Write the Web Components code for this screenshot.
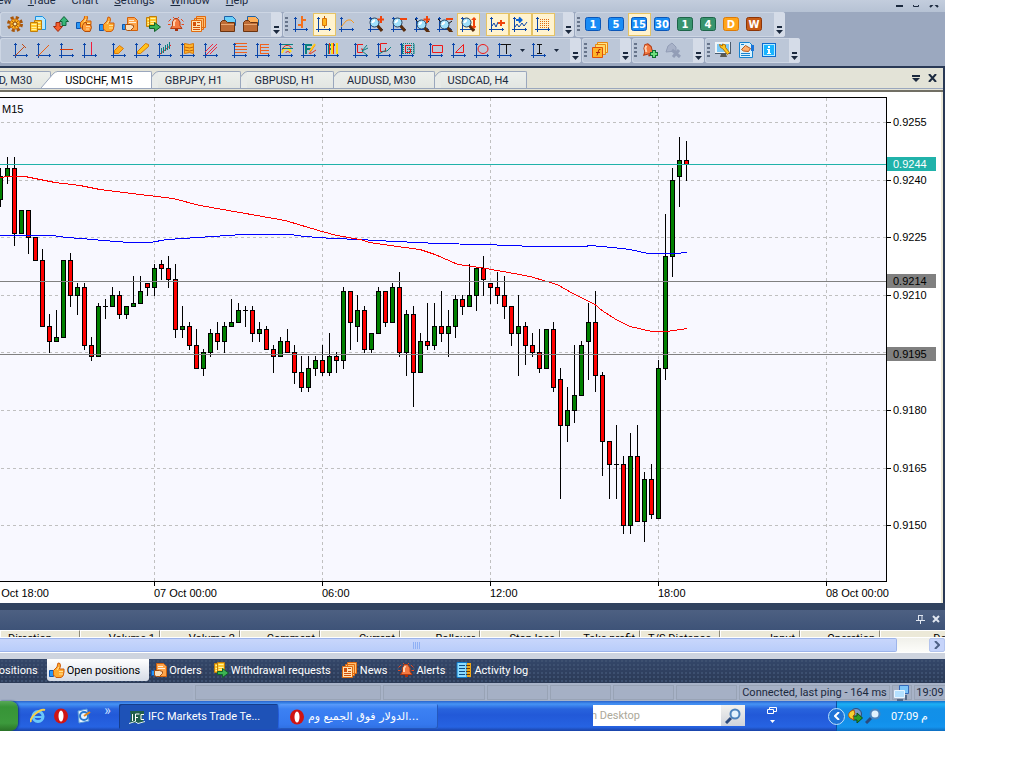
<!DOCTYPE html>
<html lang="en">
<head>
<meta charset="utf-8">
<title>Trade Terminal</title>
<style>
    html, body {
        height: 100%;
        margin: 0;
    }
    body {
        box-sizing: border-box;
        padding: 0 79px 37px 0;
        background: #fff;
        overflow: hidden;
        font: 11px/13px Roboto, "Liberation Sans", Arial, sans-serif;
        color: #1b293e;
    }
</style>
</head>
<body>
<trade-terminal></trade-terminal>

<script>
// ---------- icons (16x16) ----------
const AXES = '<path d="M2.500 1v15M0 13.500h15M1 2.500h3M13.500 12v3" stroke="#0a46aa" fill="none"/>'
const LENS = '<path d="M9 9l5 6" stroke="#5a2d0c" stroke-width="3"/><circle cx="6.500" cy="6.500" r="4.500" fill="#9fe0fb" stroke="#24405f"/><path d="M4.500 7a2.500 2.500 0 0 1 2.500-2.500" stroke="#fff" fill="none" stroke-width="2"/>'
const PLUS = '<path d="M13 0v7M9.500 3.500h7" stroke="#f0440c" stroke-width="2"/>'
const MINUS = '<path d="M9 3h7" stroke="#f0440c" stroke-width="2"/>'
const FIB = '<path d="M5 12V3h6M5 7h5" stroke="#0a8080" stroke-width="2" fill="none"/>'
const SHEET = '<path d="M5.500 1.500h7l3 3v10h-10z" fill="#ffa54a" stroke="#d0600c"/>'
const COINS = (x, y) => `<path d="M${x} ${y}h7v9h-7z" fill="#ffc62a" stroke="#c07c0a"/><path d="M${x + 1} ${y + 2}h5m-5 3h5m-5 2h5" stroke="#fff4a0" fill="none"/>`
const THUMB = '<path d="M.5 8.500h4v6h-4z" fill="#2a96f5" stroke="#0b55b0"/><path d="M4.500 8.500L8 5l1-4 2 .500.500 2.500-1 3h4.500v3l-1 4-2 1.500H7L4.500 13z" fill="#ffab30" stroke="#d05c0a"/><path d="M8 8l2-3M10 9.500h4M10 12h4" stroke="#ffe49a"/>'
const BELL = '<path d="M2.500 12.500l2-3V6l2-3.500h3L12 6v3.500l2 3z" fill="#f47a42" stroke="#b53a10"/><path d="M6 10V6l1.500-2" stroke="#ffd2b0" stroke-width="2" fill="none"/><path d="M7 14h3" stroke="#a5300d" stroke-width="2"/>'
const NEWS = '<path d="M5.500.5h9v11h-9zM3.500 2.500h9v11h-9z" fill="#ffc070" stroke="#e06a10"/><path d="M.5 4.500h10v11H.5z" fill="#ffe2b0" stroke="#e06a10"/><path d="M2 6h3v4H2zM6 6h3v1H6zM6 9h3v1H6zM2 11h7v1H2zM2 13h7v1H2z" fill="#d2500c"/>'
const PASTE = c => `<path d="M4.500.5h8l3 3v6h-11z" fill="${c}" stroke="#1d62a8"/><path d="M.5 6.500l2-2h3l2 2h7v9H.5z" fill="#bd6c36" stroke="#6b330f"/><path d="M1 8.500h13" stroke="#e8a772"/>`
const TILE = (c, d) => `<rect x=".5" y="1.500" width="15" height="13" rx="2" fill="${c}" stroke="${d}"/>`
const OPERA = '<ellipse cx="8" cy="8" rx="7" ry="7.500" fill="#cf1414"/><ellipse cx="8" cy="8" rx="2.500" ry="5.500" fill="#fff"/>'
const ICONS = {
    gear: '<circle cx="8" cy="8" r="6.500" fill="none" stroke="#a8560a" stroke-width="3" stroke-dasharray="3 2.100"/><circle cx="8" cy="8" r="5" fill="#ffb41e" stroke="#c5670c"/><path d="M8 4v8M4 8h8M5 5l6 6M11 5l-6 6" stroke="#b86408"/><circle cx="8" cy="8" r="2" fill="#ffe9a6" stroke="#8a4608"/>',
    ledger: '<path d="M5.500.5h7l3 3v10h-10z" fill="#b4e8ff" stroke="#1a90e0"/>' + COINS(4.5, 4.5) + COINS(0.5, 6.5),
    swap: '<path d="M11 .500l4.500 5H13v4H9v-4H6.500z" fill="#38b878" stroke="#126338"/><path d="M5 15.500l-4.500-5H3v-4h4v4h2.500z" fill="#f5602f" stroke="#a32a0d"/>',
    thumb2: '<g transform="translate(0 -2)">' + THUMB + '</g><path d="M6.500 9.500l2-3h2v2h4l1 3-1.500 4h-5l-2.500-2z" fill="#ff9c38" stroke="#b04c0a"/><path d="M10 10.500h4M10 13h3" stroke="#ffd89a"/>',
    thumb: THUMB,
    orders: SHEET + '<path d="M7 4.500h5M7 6.500h7" stroke="#fff0d8"/><path d="M.5 8.500h3v5h-3z" fill="#2a96f5" stroke="#0b55b0"/><path d="M3.500 8.500h5l3 1v2l-3 3h-3l-2-1z" fill="#fbe0bc" stroke="#a8500f"/>',
    withdraw: COINS(1.5, 1.5) + COINS(4.5, 0.5) + '<path d="M4.500 9.500h5v-3l6 4.500-6 4.500v-3h-5z" fill="#3cb454" stroke="#12632a"/>',
    bell: BELL + '<path d="M.5 5.500L3 3M13 3l2.500 2.500M0 8.500h2.500M13.500 8.500H16M5 1l1 1M11 1l-1 1" stroke="#e8481c"/>',
    news: NEWS,
    pasteBlue: PASTE('#6ad0fa'),
    pasteOrange: PASTE('#ffb05a'),
    bars: AXES + '<path d="M9 0v12M5 9h4M9 4h4" stroke="#f5701a" stroke-width="2"/>',
    candle: AXES + '<path d="M8.500 0v12" stroke="#b85a06"/><path d="M6.500 2.500h4v7h-4z" fill="#ffb41e" stroke="#d87408"/>',
    line: AXES + '<path d="M2 11l5-6 2-1h3l3 3" stroke="#f5981c" fill="none"/>',
    zoomInA: AXES + LENS + PLUS,
    zoomOutA: AXES + LENS + MINUS,
    zoomInB: AXES + '<path d="M1 3l4 4M15 5l-4 3" stroke="#111" fill="none"/><g transform="translate(1 2)">' + LENS + '</g>' + PLUS,
    zoomOutB: AXES + '<path d="M1 3l4 4M15 5l-4 3" stroke="#111" fill="none"/><g transform="translate(1 2)">' + LENS + '</g>' + MINUS,
    zoomFit: AXES + LENS + '<path d="M14 2v10" stroke="#f0440c" stroke-width="2"/><path d="M11 4l3-3 3 3zM11 10l3 3 3-3z" fill="#f0440c"/>',
    shift: AXES + '<path d="M3 10l2-3 2 4 2-5" stroke="#0a46aa" fill="none"/><path d="M9 7h7M12 4v6" stroke="#f0440c" stroke-width="2"/>',
    scroll: AXES + '<path d="M3 11l2-3 2 3 3-4 2 3 3-4" stroke="#0a46aa" fill="none"/><path d="M4 4h5M7 1.500L9.500 4 7 6.500" stroke="#0a64d8" fill="none" stroke-width="2"/>',
    grid: AXES + '<path d="M5 3.500h10M5 5.500h10M5 7.500h10M5 9.500h10M5 11.500h10" stroke="#e06a10" stroke-dasharray="1 1"/>',
    arrowLine: AXES + '<path d="M2 14l9-9M9 2l4 4" stroke="#c04a18"/>',
    trend: AXES + '<path d="M2 14L13 3" stroke="#f06010"/>',
    horiz: AXES + '<path d="M1 7.500h13" stroke="#d83808"/>',
    vert: AXES + '<path d="M9.500 0v13" stroke="#f01c3c"/>',
    channelA: AXES + '<path d="M3.500 8.500l5-5 4 3-5 5h-4z" fill="#ffae1e" stroke="#d87a08"/>',
    channelB: AXES + '<path d="M3.500 9.500l8-8 3 1v2l-8 7h-3z" fill="#ffc21a" stroke="#d87a08"/>',
    regress: AXES + '<path d="M3 12L14 3" stroke="#e81818"/><path d="M4.500 6v6M6.500 5v6M8.500 3v6M10.500 2v6M12.500 0v7" stroke="#0a8080"/>',
    deviation: AXES + '<path d="M4.500 1.500l5 1 4-1v10l-4-1-5 1z" fill="#ffb42a" stroke="#d87808"/><path d="M4.500 5l5 1 4-1M4.500 8l5 1 4-1" stroke="#c46408" fill="none"/>',
    parallel: AXES + '<path d="M2 10L10 2M3 13L14 2M7 12l7-7" stroke="#f02840" fill="none"/>',
    levels: AXES + '<path d="M3 1.500h12M3 4.500h12M3 7.500h12M3 10.500h12" stroke="#f0601c"/>',
    levelsB: AXES + '<path d="M5 2.500h9M5 5.500h9M5 8.500h9M5 11.500h9M5.500 2v9" stroke="#f0601c"/>',
    fan: AXES + '<path d="M4 8c2-6 8-6 10-1" stroke="#e82818" fill="none"/><path d="M4 11c2-6 6-6 9-1" stroke="#ffdc18" fill="none" stroke-width="2"/><path d="M4 2.500h11M4 6.500h11" stroke="#0a8080"/><path d="M8 11c0-2 3-2 4 0" stroke="#e82818" fill="none"/>',
    fibArrow: AXES + FIB + '<path d="M8 12l6-9M9 12l6-4" stroke="#e83a18"/><path d="M9 9l5-7" stroke="#ffc818" stroke-width="2"/>',
    fibBars: AXES + FIB + '<path d="M5.500 1v11M9.500 1v11" stroke="#e82818"/><path d="M13 1v11M8 1v11" stroke="#ffdc18" stroke-width="2"/>',
    gannA: AXES + '<path d="M10 2.500H4.500v8h5V7H8" stroke="#e81818" fill="none"/><path d="M9 9l5-6M9 9l6-3M9 9l5 4" stroke="#0a8080"/>',
    gannB: AXES + '<path d="M11 1.500H4.500v8h5V6" stroke="#e81818" fill="none"/><path d="M3 12l5-3h3l4-4" stroke="#0a8080" fill="none"/>',
    gannC: AXES + '<path d="M4 1.500h11M4 3.500h11M4 5.500h11M4 7.500h11M4 9.500h11M4 11.500h11" stroke="#0a8080" stroke-dasharray="1 1"/><path d="M3.500 2v10M15 2v10" stroke="#0a8080"/><path d="M12 3.500H6.500v7h5V7H9" stroke="#e81818" fill="none"/>',
    rect: AXES + '<path d="M4.500 3.500h10v7h-10z" stroke="#f01818" fill="none"/>',
    triangle: AXES + '<path d="M4.500 10.500l8-8v8z" stroke="#f01818" fill="none"/>',
    ellipse: AXES + '<ellipse cx="9" cy="7" rx="5" ry="4.500" stroke="#f01818" fill="none"/>',
    text: AXES + '<path d="M4 2.500h10M9.500 2v10" stroke="#111" fill="none"/>',
    label: AXES + '<path d="M6 2.500h5M8.500 3v8M6 11.500h5" stroke="#111" fill="none"/>',
    script: '<path d="M5.500.5h10v10h-10z" fill="#ffe38a" stroke="#e88810"/><path d="M3.500 2.500h10v10h-10z" fill="#ffd868" stroke="#e88810"/><path d="M.5 5.500h10v10H.5z" fill="#ffb52a" stroke="#e0500a"/><path d="M8.500 7.500H7L5 13.500M4 10.500h4" stroke="#b02a08" fill="none"/>',
    bellAdd: '<g transform="rotate(-15 8 8) translate(-2 -1)">' + BELL + '</g><path d="M12 8v8M8 12h8" stroke="#127032" stroke-width="4"/><path d="M12 9v6M9 12h6" stroke="#6ee07a" stroke-width="2"/>',
    bellOff: '<path d="M1 10l2-6 4-3 4 4v4z" fill="#a8b2c8" stroke="#929db6"/><path d="M7 8l8 7M14 8l-6 7" stroke="#929db6" stroke-width="3"/>',
    tools: '<path d="M1 1h14v10H1z" fill="#7cc8f5" stroke="#eef4f8" stroke-width="2"/><path d="M0 11.500h16M15.500 0v12" stroke="#4a5a6c"/><path d="M6 12h5l1 3H5z" fill="#5a5a52"/><path d="M4.500 2.500l1 3 2 1 5 6 2-2-4-5V3l-3-1v2z" fill="#ffc81e" stroke="#b87406"/>',
    contract: '<path d="M1.500.5h10l3 3v12h-13z" fill="#d8f2ff" stroke="#1583d0"/><path d="M3 2.500h3M3 11.500h9M3 13.500h9" stroke="#1583d0"/><path d="M3.500 7.500l4-4 5 3-2 3-5-.500z" fill="#ffb070" stroke="#b4561a"/><path d="M13 3h3v6h-3z" fill="#1a74d8"/>',
    info: '<rect x="1.500" y="1.500" width="13" height="13" fill="#19b4ff" stroke="#0a6ad0"/><rect x="2.500" y="2.500" width="11" height="11" fill="none" stroke="#b4ecff"/><path d="M7 4h2v2H7zM6 7h3v4h1v1H6v-1h1V8H6z" fill="#fff"/>',
    activity: '<path d="M1 .5h10v15H1z" fill="#8cdcff" stroke="#0e78c8"/><path d="M3 3.500h6M3 6.500h6M3 9.500h6M3 12.500h6" stroke="#0c4b86"/><path d="M11 1h4v14h-4z" fill="#f0a818"/><path d="M10 3.500h4M10 6.500h4M10 9.500h4M10 12.500h4" stroke="#6c3c04"/>',
    m1: TILE('#1a8cf5', '#0a56b8'),
    h1: TILE('#38946e', '#1d6448'),
    d1: TILE('#ffa51a', '#dc7a08'),
    w1: TILE('#c65a14', '#8c3406'),
    ie: '<circle cx="8" cy="8.500" r="5" fill="none" stroke="#69c8fb" stroke-width="3"/><path d="M4 9h9" stroke="#69c8fb" stroke-width="2"/><path d="M1 14c-2-4 9-14 14-12" stroke="#f5cf4a" stroke-width="2" fill="none"/>',
    opera: OPERA,
    outlook: '<path d="M2 3l9-2 2 12-10 2z" fill="#e8f4ff" stroke="#5a9bd8"/><circle cx="8" cy="8" r="4" fill="none" stroke="#2a7ad0" stroke-width="2"/><path d="M8 8l6-4" stroke="#e88a18" stroke-width="2"/>',
    ifc: '<path d="M1 2h14v3l-2 3 2 6H1l1-7z" fill="#21604a"/><path d="M3.500 12V5M6.500 12V5h4M6 8.500h3M15 5.500h-3v5h3" stroke="#fff" fill="none"/><path d="M0 14.500l6-2 3 2 7-2" stroke="#dcecf8" fill="none"/>',
    lens: '<path d="M6 10l-5 5" stroke="#2b4a7c" stroke-width="3"/><circle cx="10" cy="6" r="4.500" fill="#e2f2fd" stroke="#4b83bd" stroke-width="2"/>',
    globe: '<circle cx="9" cy="6" r="5.500" fill="#7a9cc8" stroke="#2c4c7c"/><path d="M6 8h4v-3l5.500 5-5.500 5v-3H6z" fill="#2c9c28" stroke="#0f4c14"/><path d="M7 2C2 3 0 7 3 10l4 2-1-4 2-2z" fill="#f5d230" stroke="#b4560c"/>',
    net: '<path d="M5.500.5h9v8h-9z" fill="#7cc4f8" stroke="#3468b8"/><path d="M.5 5.500h10v7H.5z" fill="#b4e0ff" stroke="#e8f4ff"/><path d="M3 15h6M12 10v5" stroke="#566a88" stroke-width="2"/>',
    restore: '<path d="M5.500 3.500h7v4h-7z" fill="none" stroke="#fff"/><path d="M3.500 5.500h6v4h-6z" fill="#2460dc" stroke="#fff"/>',
}

function define(tag, css, render) {
    customElements.define(tag, class extends HTMLElement {
        connectedCallback() {
            if (this.shadowRoot) return
            const root = this.attachShadow({ mode: "open" })
            root.innerHTML = `<style>:host{box-sizing:border-box}*{box-sizing:border-box}button{font:inherit;color:inherit;border:0;background:none;padding:0;margin:0}${css}</style>${render(this)}`
        }
    })
}

define("ui-icon", `
    :host { display: block; flex: none; width: 16px; height: 16px; }
    svg { display: block; }
`, el => `<svg width="16" height="16" viewBox="0 0 16 16" aria-hidden="true">${ICONS[el.getAttribute("name")] || ""}</svg>`)

// ---------- menu ----------
define("menu-bar", `
    :host { display: flex; align-items: flex-end; justify-content: space-between; height: 12px; overflow: hidden;
            background: linear-gradient(#c3cddd, #b6c2d4); }
    nav { display: flex; gap: 16px; height: 18px; margin-left: -12px; }
    button { height: 13px; }
    .win { display: flex; gap: 9px; height: 12px; align-items: flex-start; padding-right: 6px; }
    svg { display: block; }
`, () => `
    <nav aria-label="Main menu">
        <button>View</button><button><u>T</u>rade</button><button>Chart</button>
        <button><u>S</u>ettings</button><button><u>W</u>indow</button><button><u>H</u>elp</button>
    </nav>
    <div class="win">
        <button aria-label="Minimize"><svg width="8" height="3"><path d="M1 1h7" stroke="#1b293e" stroke-width="2"/></svg></button>
        <button aria-label="Restore"><svg width="8" height="3"><path d="M1.500 0v1.500h5V0" stroke="#1b293e" fill="none"/></svg></button>
        <button aria-label="Close"><svg width="10" height="3"><path d="M4 -1L1 2M6 -1l3 3" stroke="#1b293e" stroke-width="2"/></svg></button>
    </div>`)

// ---------- toolbars ----------
define("tool-strip", `
    :host { display: flex; align-items: stretch; height: 25px; padding-left: 4px; border-radius: 3px;
            background: #bcc7d8; box-shadow: inset 0 0 0 1px #cdd6e4; }
    :host([grip]) { padding-left: 0; }
    :host([wide]) { padding-left: 10px; }
    .grip { width: 3px; margin: 5px 2px; background: repeating-linear-gradient(#67748a 0 2px, transparent 2px 4px); }
    .items { display: flex; align-items: center; }
    .more { display: flex; align-items: flex-end; justify-content: center; width: 11px; margin-left: 8px; padding-bottom: 3px;
            background: #d5dce8; border-radius: 0 3px 3px 0; }
    ::slotted(hr) { width: 6px; border: 0; margin: 0; }
`, el => `
    ${el.hasAttribute("grip") ? '<span class="grip"></span>' : ""}
    <div class="items"><slot></slot></div>
    <button class="more" aria-label="Toolbar options"><svg width="7" height="8"><path d="M1 1h5" stroke="#1b293e" stroke-width="2"/><path d="M0 4h7L3.500 8z" fill="#1b293e"/></svg></button>`)

define("tool-button", `
    :host { display: flex; }
    button { display: grid; place-items: center; width: 23px; height: 23px; padding: 0 1px 1px 0; border: 1px solid transparent; }
    button > * { grid-area: 1 / 1; }
    :host([pressed]) button { background: #fff3cf; border: 1px solid #e5c365; }
    .cap { color: #fff; font: bold 10px/13px "DejaVu Sans", sans-serif; z-index: 1; }
    .menu { width: 11px; padding: 0; }
`, el => `
    <button title="${el.getAttribute("label")}" aria-label="${el.getAttribute("label")}" aria-pressed="${el.hasAttribute("pressed")}">
        <ui-icon name="${el.getAttribute("icon")}"></ui-icon>
        ${el.textContent ? '<span class="cap"><slot></slot></span>' : ""}
    </button>
    ${el.hasAttribute("menu") ? '<button class="menu" aria-label="More"><svg width="5" height="3"><path d="M0 0h5L2.500 3z" fill="#1b293e"/></svg></button>' : ""}`)

const btn = (icon, label, attrs = "", text = "") =>
    `<tool-button icon="${icon}" label="${label}" ${attrs}>${text}</tool-button>`

define("tool-rows", `
    :host { display: flex; flex-direction: column; gap: 1px; height: 54px; padding-bottom: 3px; background: #9ba8bf; }
    .row { display: flex; gap: 1px; }
    hr { width: 6px; border: 0; margin: 0; }
`, () => `
    <div class="row">
        <tool-strip>
            ${btn("gear", "Options")}${btn("ledger", "Accounts")}${btn("swap", "Transfer")}${btn("thumb2", "Closed positions")}${btn("thumb", "Open positions")}${btn("orders", "Orders")}${btn("withdraw", "Withdrawal requests")}${btn("bell", "Alerts")}${btn("news", "News")}<hr>${btn("pasteBlue", "Load template")}${btn("pasteOrange", "Save template")}
        </tool-strip>
        <tool-strip grip>
            ${btn("bars", "Bars")}${btn("candle", "Candles", "pressed")}${btn("line", "Line")}<hr>${btn("zoomInA", "Zoom in")}${btn("zoomOutA", "Zoom out")}${btn("zoomInB", "Expand")}${btn("zoomOutB", "Shrink")}${btn("zoomFit", "Auto fit", "pressed")}<hr>${btn("shift", "Chart shift", "pressed")}${btn("scroll", "Auto scroll", "pressed")}${btn("grid", "Grid", "pressed")}
        </tool-strip>
        <tool-strip grip>
            ${btn("m1", "1 minute", "", "1")}${btn("m1", "5 minutes", "", "5")}${btn("m1", "15 minutes", "pressed", "15")}${btn("m1", "30 minutes", "", "30")}${btn("h1", "1 hour", "", "1")}${btn("h1", "4 hours", "", "4")}${btn("d1", "Day", "", "D")}${btn("w1", "Week", "", "W")}
        </tool-strip>
    </div>
    <div class="row">
        <tool-strip wide>
            ${btn("arrowLine", "Arrow")}${btn("trend", "Trend line")}${btn("horiz", "Horizontal line")}${btn("vert", "Vertical line")}<hr>${btn("channelA", "Channel")}${btn("channelB", "Wide channel")}${btn("regress", "Regression")}${btn("deviation", "Deviation")}${btn("parallel", "Pitchfork")}<hr>${btn("levels", "Levels")}${btn("levelsB", "Extension")}${btn("fan", "Arcs")}${btn("fibArrow", "Fibonacci fan")}${btn("fibBars", "Time zones")}<hr>${btn("gannA", "Gann fan")}${btn("gannB", "Gann line")}${btn("gannC", "Gann grid")}<hr>${btn("rect", "Rectangle")}${btn("triangle", "Triangle")}${btn("ellipse", "Ellipse")}${btn("text", "Text", "menu")}${btn("label", "Label", "menu")}
        </tool-strip>
        <tool-strip grip>${btn("script", "Indicators")}</tool-strip>
        <tool-strip grip>${btn("bellAdd", "Add alert")}${btn("bellOff", "Remove alert")}</tool-strip>
        <tool-strip grip>${btn("tools", "Settings")}${btn("contract", "Contracts")}${btn("info", "About")}</tool-strip>
    </div>`)

// ---------- chart tabs ----------
define("chart-tab", `
    :host { display: flex; height: 17px; margin-right: -1px; }
    svg { display: block; flex: none; margin-right: -1px; }
    button { height: 17px; padding: 0 18px 0 7px; border: solid #9aa7bd; border-width: 1px 1px 0 0; border-radius: 0 2px 0 0;
             background: linear-gradient(#ecefec, #e2e6e2); white-space: nowrap; }
    :host([active]) { margin-left: -9px; z-index: 1; }
    :host([active]) button { background: #fff; color: #000; padding-left: 8px; }
`, el => (el.hasAttribute("active")
    ? '<svg width="17" height="17"><path d="M0 17L12 3Q14 .5 17 .5V17z" fill="#fff"/><path d="M0 17L12 3Q14 .5 17 .5" stroke="#9aa7bd" fill="none"/></svg>'
    : '<svg width="8" height="17"><path d="M.5 17V6L4 2Q5.500.5 8 .5V17z" fill="#e8ebe8"/><path d="M.5 17V6L4 2Q5.500.5 8 .5" stroke="#9aa7bd" fill="none"/></svg>')
    + '<button role="tab"><slot></slot></button>')

define("tab-strip", `
    :host { display: flex; align-items: flex-end; justify-content: space-between; height: 26px; background: #e3e3d7;
            border-top: 2px solid #293955; border-bottom: 2px solid #716f64; }
    .tabs { display: flex; flex: 1; margin: 0 0 2px -29px; box-shadow: 0 1px #9aa7bd; }
    .ctl { display: flex; align-items: center; gap: 8px; height: 21px; margin-bottom: 1px; padding: 0 6px 1px 0; box-shadow: 0 -1px #9aa7bd inset; }
    svg { display: block; }
`, () => `
    <div class="tabs" role="tablist">
        <chart-tab>USD, M30</chart-tab><chart-tab active>USDCHF, M15</chart-tab><chart-tab>GBPJPY, H1</chart-tab>
        <chart-tab>GBPUSD, H1</chart-tab><chart-tab>AUDUSD, M30</chart-tab><chart-tab>USDCAD, H4</chart-tab>
    </div>
    <div class="ctl">
        <button aria-label="Window list"><svg width="8" height="7"><path d="M0 1h8" stroke="#1b293e" stroke-width="2"/><path d="M0 3h8L4 7z" fill="#1b293e"/></svg></button>
        <button aria-label="Close"><svg width="9" height="8"><path d="M1 0l7 8M8 0L1 8" stroke="#1b293e" stroke-width="2"/></svg></button>
    </div>`)

// ---------- chart ----------
// high, body top, body bottom, low, direction (1 up, 0 down); one candle every 7px
const CANDLES = [
    [168,176,200,207,1],[157,168,177,184,1],[157,168,234,246,0],[210,210,234,234,1],[210,210,238,254,0],[237,237,261,261,0],
    [249,260,327,327,0],[314,326,342,353,0],[310,337,342,342,1],[260,260,338,338,1],[253,260,296,307,0],[283,287,296,315,1],
    [283,287,346,350,0],[337,345,357,361,0],[303,306,357,357,1],[299,306,307,319,1],[287,295,307,307,1],[291,295,315,319,0],
    [306,306,315,319,1],[276,303,307,307,1],[276,291,304,304,1],[283,283,288,296,0],[264,268,288,296,1],[260,264,269,280,0],
    [256,268,280,288,0],[264,279,330,338,0],[306,326,330,338,1],[322,326,346,350,0],[329,345,369,369,0],[349,352,369,376,1],
    [329,333,353,357,1],[322,333,342,350,0],[322,326,342,353,1],[299,322,327,327,1],[303,310,323,323,1],[306,310,311,327,1],
    [306,310,334,342,0],[322,329,334,342,1],[326,329,350,350,0],[345,349,357,373,0],[337,341,357,357,1],[329,341,353,353,0],
    [345,352,373,384,0],[356,372,388,392,0],[356,368,388,392,1],[356,360,369,376,1],[345,360,373,376,0],[333,356,373,376,1],
    [352,356,361,373,0],[287,291,361,369,1],[291,291,323,350,0],[295,310,327,342,1],[306,310,350,353,0],[333,333,350,353,1],
    [287,291,334,334,1],[291,291,323,327,0],[283,287,323,323,1],[272,287,353,357,0],[310,314,353,376,1],[306,314,373,407,0],
    [333,341,373,373,1],[303,341,346,350,0],[303,326,346,350,1],[291,326,334,342,0],[310,326,334,357,1],[295,299,327,338,1],
    [295,299,307,315,0],[264,295,307,307,1],[268,268,296,311,1],[256,268,280,296,0],[283,283,288,304,0],[272,287,296,304,0],
    [276,295,307,319,0],[306,306,334,346,0],[295,326,334,376,1],[322,326,346,365,0],[333,345,353,357,0],[329,352,369,373,0],
    [329,329,369,369,1],[322,329,388,392,0],[368,379,426,499,0],[387,410,426,442,1],[345,395,411,423,1],[341,345,396,396,1],
    [303,322,342,380,1],[291,322,376,392,0],[372,375,442,476,0],[441,441,465,499,0],[425,464,465,499,1],[456,464,526,534,0],
    [433,456,526,534,1],[425,456,522,522,0],[472,479,522,542,1],[464,479,515,519,0],[360,368,519,519,1],[214,256,369,380,1],
    [168,180,257,277,1],[137,160,177,207,1],[141,160,165,181,0],
]
const RED = "0,177 8,176 25,176 40,179 55,182 80,185 100,189 140,194 157,196 173,198 200,205 240,212 285,220 322,231 337,235 360,239 370,242 397,246 420,249 435,254 458,264 480,267 503,271 530,276 557,284 573,293 595,304 602,310 616,319 630,326 652,331 667,331 687,328"
const BLUE = "0,235 52,235 67,237 93,239 103,240 130,242 150,242 167,239 183,238 213,236 243,234 290,234 305,236 333,238 360,239 375,240 417,242 438,243 480,244 513,245 530,246 585,246 590,245 613,247 630,249 648,253 675,253 687,252"
const PRICES = [[122,"0.9255"],[180,"0.9240"],[237,"0.9225"],[295,"0.9210"],[352,""],[410,"0.9180"],[468,"0.9165"],[525,"0.9150"]]
const TIMES = [[-14,"06 Oct 18:00"],[154,"07 Oct 00:00"],[322,"06:00"],[490,"12:00"],[658,"18:00"],[826,"08 Oct 00:00"]]
const LEVELS = [[281,"0.9214","#808080","#000"],[354,"0.9195","#808080","#000"],[164,"0.9244","#20b2aa","#fff"]]
const TOP = 92

customElements.define("price-chart", class extends HTMLElement {
    connectedCallback() {
        this.attachShadow({ mode: "open" }).innerHTML = `
            <style>
                :host { display: block; min-height: 0; overflow: hidden; background: #fff; border-right: 2px solid #ece9d8; }
                svg { display: block; width: 100%; height: 100%; shape-rendering: crispEdges; }
                text { font: 11px "Liberation Sans", Arial, sans-serif; fill: #000; }
            </style>
            <svg role="img" aria-label="USDCHF, M15"></svg>`
        this.draw()
        new ResizeObserver(() => this.draw()).observe(this)
    }

    draw() {
        const right = this.clientWidth - 55
        const bottom = this.clientHeight - 22 + TOP
        let s = `<rect x="-1" y="97.500" width="${right + 1.5}" height="${bottom - 97}" fill="#f8f8ff" stroke="#000"/>`
        for (const [y, label] of PRICES) {
            s += `<path d="M1 ${y + 0.5}H${right}" stroke="#c0c0c0" stroke-dasharray="3 3"/>`
            if (label) s += `<path d="M${right + 1} ${y + 0.5}h4" stroke="#000"/><text x="${right + 7}" y="${y + 4}">${label}</text>`
        }
        for (const [x, label] of TIMES) {
            s += `<path d="M${x + 0.5} 98V${bottom}" stroke="#c0c0c0" stroke-dasharray="3 3"/>`
            s += `<path d="M${x + 0.5} ${bottom}v5" stroke="#000"/><text x="${x}" y="${bottom + 16}">${label}</text>`
        }
        CANDLES.forEach(([hi, top, bot, lo, up], i) => {
            const x = i * 7
            s += `<path d="M${x + 0.5} ${hi}V${lo}" stroke="#000"/>`
            s += `<rect x="${x - 2}" y="${top}" width="5" height="${bot - top}" fill="#000"/>`
            if (bot - top > 2) s += `<rect x="${x - 1}" y="${top + 1}" width="3" height="${bot - top - 2}" fill="${up ? "#008000" : "#f00"}"/>`
        })
        s += `<g transform="translate(0 .5)" fill="none"><polyline points="${BLUE}" stroke="#00f"/><polyline points="${RED}" stroke="#f00"/></g>`
        for (const [y, label, bg, fg] of LEVELS) {
            s += `<path d="M0 ${y + 0.5}H${right}" stroke="${bg}"/><rect x="${right + 1}" y="${y - 7}" width="49" height="14" fill="${bg}"/>`
            s += `<text x="${right + 7}" y="${y + 4}" style="fill:${fg}">${label}</text>`
        }
        s += '<text x="2" y="113">M15</text>'
        this.shadowRoot.querySelector("svg").innerHTML = `<g transform="translate(0 ${-TOP})">${s}</g>`
    }
})

// ---------- positions pane ----------
define("positions-pane", `
    :host { display: block; border-top: 7px solid #30425f; background: #ced4df; }
    header { display: flex; align-items: center; justify-content: flex-end; gap: 7px; height: 20px; padding: 0 5px 2px 0;
             background: linear-gradient(#4d6082, #3e5378); }
    svg { display: block; }
    .head { height: 7px; overflow: hidden; background: #ece9d8; }
    table { table-layout: fixed; width: 960px; border-collapse: separate; border-spacing: 0; color: #000; }
    th { width: 80px; height: 16px; padding: 1px 4px 0 7px; font-weight: normal; text-align: right; white-space: nowrap; overflow: hidden;
         vertical-align: top; border-left: 1px solid #fff; border-right: 1px solid #8d8a78; border-top: 1px solid #fff; }
    th.l { text-align: left; }
    .scroll { display: flex; height: 16px; border: solid #fff; border-width: 1px 0; background: linear-gradient(#f0f0ea, #fdfdfa); }
    .thumb { flex: 1; border: 1px solid #9db4ea; border-left: 0; border-radius: 0 2px 2px 0; background: linear-gradient(#c8d6fb, #b9cdfa);
             display: grid; place-items: center; padding-right: 62px; }
    .gap { width: 32px; }
    .arrow { display: grid; place-items: center; width: 16px; border: 1px solid #b3c4ee; border-radius: 2px; background: #c6d4fa; }
`, () => `
    <header>
        <button aria-label="Pin"><svg width="9" height="9"><path d="M2.500 0v5M6 0v5M2 .5h5M0 5.500h9M4.500 6v3" stroke="#e0e6f0" fill="none"/></svg></button>
        <button aria-label="Close"><svg width="8" height="8"><path d="M1 1l6 6M7 1L1 7" stroke="#e0e6f0" stroke-width="2"/></svg></button>
    </header>
    <div class="head"><table><thead><tr>
        <th class="l">Direction</th><th>Volume 1</th><th>Volume 2</th><th>Comment</th><th>Current</th><th>Rollover</th>
        <th>Stop loss</th><th>Take profit</th><th class="l">T/S Distance</th><th>Input</th><th>Operation</th><th>Deal</th>
    </tr></thead></table></div>
    <div class="scroll">
        <button class="thumb" aria-label="Scroll"><svg width="8" height="7"><path d="M.5 0v7M2.500 0v7M4.500 0v7M6.500 0v7" stroke="#8fb0f5"/></svg></button>
        <span class="gap"></span>
        <button class="arrow" aria-label="Scroll right"><svg width="6" height="8"><path d="M1 0l4 4-4 4" stroke="#4d6185" stroke-width="2" fill="none"/></svg></button>
    </div>`)

define("pane-tab", `
    :host { display: flex; height: 22px; }
    button { display: flex; align-items: center; gap: 2px; padding: 0 9px 0 2px; color: #fff; white-space: nowrap; }
    :host([active]) button { color: #000; background: linear-gradient(#fff, #d5dbe6); border-radius: 0 0 3px 3px; }
`, el => `<button role="tab">${el.hasAttribute("icon") ? `<ui-icon name="${el.getAttribute("icon")}"></ui-icon>` : ""}<slot></slot></button>`)

define("pane-tabs", `
    :host { display: flex; height: 30px; padding-bottom: 2px; border-top: 6px solid #ced4df; overflow: hidden;
            background: radial-gradient(#3d5070 1px, transparent 1px) 0 0 / 4px 4px, linear-gradient(#34476a, #2b3a56); }
    .bar { display: flex; margin-left: -64px; }
`, () => `<div class="bar" role="tablist">
    <pane-tab icon="thumb2">Closed positions</pane-tab><pane-tab icon="thumb" active>Open positions</pane-tab>
    <pane-tab icon="orders">Orders</pane-tab><pane-tab icon="withdraw">Withdrawal requests</pane-tab>
    <pane-tab icon="news">News</pane-tab><pane-tab icon="bell">Alerts</pane-tab><pane-tab icon="activity">Activity log</pane-tab>
</div>`)

define("status-bar", `
    :host { display: flex; gap: 2px; height: 18px; padding: 2px 0 1px; background: #a8b3c8; }
    span { display: flex; align-items: center; justify-content: center; border: 1px solid #98a3b5; background: #a5b0c5; white-space: nowrap; }
    .hint { flex: 1; border: 0; } .a { width: 186px; } .b { width: 102px; } .c { width: 61px; }
    .ping { width: 151px; } .net { width: 20px; } .time { width: 31px; border-right: 0; }
`, () => `
    <span class="hint"></span><span class="a"></span><span class="b"></span><span class="c"></span><span class="c"></span><span class="c"></span><span class="c"></span>
    <span class="ping">Connected, last ping - 164 ms</span><span class="net"><ui-icon name="net"></ui-icon></span><span class="time">19:09</span>`)

// ---------- taskbar ----------
define("task-bar", `
    :host { display: flex; align-items: stretch; height: 30px; color: #fff;
            background: linear-gradient(#2a64cc, #4593f5 3px, #2863dd 8px, #2259d8 14px, #2663e2 26px, #1941a5); }
    svg { display: block; }
    .start { width: 18px; border-radius: 0 8px 8px 0; background: linear-gradient(#58a858, #379437 6px, #3c9a3c 22px, #2a7227); box-shadow: 1px 0 2px #14357e; }
    .quick { display: flex; align-items: center; gap: 7px; padding-left: 12px; }
    .more { align-self: flex-start; width: 7px; margin: 3px 8px 0 5px; color: #c4dcff; font-size: 14px; }
    .task { display: flex; align-items: center; gap: 3px; width: 159px; height: 25px; margin: 3px 1px 0 0; padding: 0 10px; border-radius: 2px;
            background: linear-gradient(#5b9bfa, #3c81f3 5px, #3578ee 20px, #2f6fe0); box-shadow: inset -1px -1px #2558bd; }
    .task.on { background: #1e52b7; box-shadow: inset 1px 1px #163d8b; }
    .ar { font-family: "DejaVu Sans", sans-serif; }
    .task span { white-space: nowrap; }
    .find { display: flex; margin: 4px 19px 0 auto; height: 21px; }
    input { width: 128px; padding: 0; border: 0; background: #fff; font: inherit; text-indent: -2px; }
    input::placeholder { color: #aca899; opacity: 1; }
    .go { display: grid; place-items: center; width: 24px; background: linear-gradient(#f2f2ee, #cfd3dc); }
    .lang { display: flex; flex-direction: column; align-items: center; width: 16px; padding-top: 3px; margin-right: 56px; }
    .tray { display: flex; align-items: center; gap: 2px; width: 109px; border-left: 1px solid #0a4fa0;
            background: linear-gradient(#1173cf, #1cb0f5 3px, #1290e8 8px, #1190ea 20px, #1494ee 26px, #0d6dc0); }
    .hide { display: grid; place-items: center; width: 17px; height: 17px; margin-left: -9px; border: 1px solid #bfe3fb; border-radius: 50%; background: #1f74d8; }
    time { margin-left: 8px; white-space: nowrap; }
`, () => `
    <button class="start" aria-label="Start"></button>
    <div class="quick">
        <ui-icon name="ie"></ui-icon><ui-icon name="opera"></ui-icon><ui-icon name="outlook"></ui-icon>
        <button class="more" aria-label="More">»</button>
    </div>
    <button class="task on"><ui-icon name="ifc"></ui-icon><span>IFC Markets Trade Te...</span></button>
    <button class="task"><ui-icon name="opera"></ui-icon><span class="ar" lang="ar">الدولار فوق الجميع وم...</span></button>
    <div class="find"><input type="text" aria-label="Search desktop" placeholder="h Desktop"><button class="go" aria-label="Search"><ui-icon name="lens"></ui-icon></button></div>
    <div class="lang"><ui-icon name="restore"></ui-icon><svg width="5" height="3"><path d="M0 0h5L2.500 3z" fill="#fff"/></svg></div>
    <div class="tray">
        <button class="hide" aria-label="Show hidden icons"><svg width="6" height="8"><path d="M5 0L1 4l4 4" stroke="#fff" stroke-width="2" fill="none"/></svg></button>
        <ui-icon name="globe"></ui-icon><ui-icon name="lens"></ui-icon><time>07:09 م</time>
    </div>`)

define("trade-terminal", `
    :host { display: flex; flex-direction: column; height: 100%; overflow: hidden; }
    main { flex: 1; display: flex; flex-direction: column; min-height: 0; border-right: 2px solid #293955; }
    price-chart { flex: 1; }
`, () => `
    <menu-bar></menu-bar>
    <tool-rows></tool-rows>
    <main>
        <tab-strip></tab-strip>
        <price-chart></price-chart>
    </main>
    <positions-pane></positions-pane>
    <pane-tabs></pane-tabs>
    <status-bar></status-bar>
    <task-bar></task-bar>`)
</script>
</body>
</html>
